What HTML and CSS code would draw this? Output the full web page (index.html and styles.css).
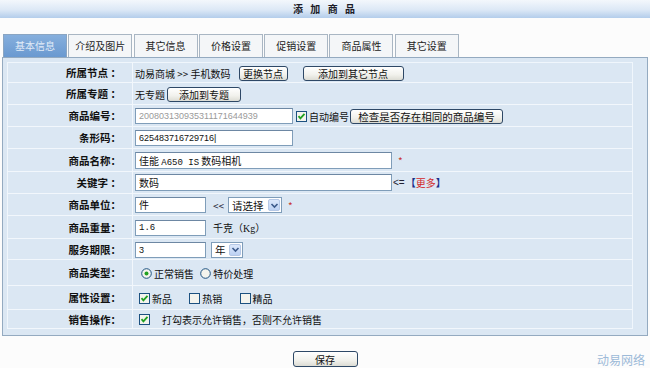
FILE: index.html
```html
<!DOCTYPE html>
<html lang="zh">
<head>
<meta charset="utf-8">
<title>添加商品</title>
<link rel="stylesheet" href="styles.css">
</head>
<body>
<div class="title">添 加 商 品</div>
<ul class="tabs">
  <li class="tab active">基本信息</li>
  <li class="tab">介绍及图片</li>
  <li class="tab">其它信息</li>
  <li class="tab">价格设置</li>
  <li class="tab">促销设置</li>
  <li class="tab">商品属性</li>
  <li class="tab">其它设置</li>
</ul>
<div class="panel">
  <table class="form">
    <tr class="r20">
      <th>所属节点 ：</th>
      <td><span class="txt">动易商城 &gt;&gt; 手机数码</span><button class="btn w-node">更换节点</button><button class="btn w-other">添加到其它节点</button></td>
    </tr>
    <tr class="r22">
      <th>所属专题 ：</th>
      <td><span class="txt">无专题</span><button class="btn w-topic">添加到专题</button></td>
    </tr>
    <tr class="r22">
      <th>商品编号：</th>
      <td><span class="input w-code num grey">200803130935311171644939</span><span class="cb"><svg width="11" height="11" viewBox="0 0 11 11"><rect x="0.5" y="0.5" width="10" height="10" fill="#f4f4ee" stroke="#1c5180"/><path d="M2.5 5.2 L4.4 7.3 L8.5 2.8" fill="none" stroke="#21a121" stroke-width="1.8"/></svg></span><span class="txt">自动编号</span><button class="btn w-check">检查是否存在相同的商品编号</button></td>
    </tr>
    <tr class="r22">
      <th>条形码：</th>
      <td><span class="input w-code num">625483716729716|</span></td>
    </tr>
    <tr class="r23">
      <th>商品名称：</th>
      <td><span class="input w-name tall">佳能 <span class="mono">A650 IS</span> 数码相机</span><span class="star">*</span></td>
    </tr>
    <tr class="r22">
      <th>关键字 ：</th>
      <td><span class="input w-name tall">数码</span><span class="arrow">&lt;=</span><span class="more"><b class="br">【</b>更多<b class="br">】</b></span></td>
    </tr>
    <tr class="r22">
      <th>商品单位：</th>
      <td><span class="input w-short">件</span><span class="ll">&lt;&lt;</span><span class="select w-sel">请选择<span class="sel-btn"><svg width="9" height="9" viewBox="0 0 9 9"><path d="M1.5 3 L4.5 6 L7.5 3" fill="none" stroke="#3c5a8a" stroke-width="1.6"/></svg></span></span><span class="star">*</span></td>
    </tr>
    <tr class="r23">
      <th>商品重量：</th>
      <td><span class="input w-short mono">1.6</span><span class="txt unit">千克（<span class="kg">Kg</span>）</span></td>
    </tr>
    <tr class="r21">
      <th>服务期限：</th>
      <td><span class="input w-short num">3</span><span class="select w-year">年<span class="sel-btn"><svg width="9" height="9" viewBox="0 0 9 9"><path d="M1.5 3 L4.5 6 L7.5 3" fill="none" stroke="#3c5a8a" stroke-width="1.6"/></svg></span></span></td>
    </tr>
    <tr class="r26">
      <th>商品类型：</th>
      <td class="opts">
        <span class="rb"><svg width="11" height="11" viewBox="0 0 11 11"><circle cx="5.5" cy="5.5" r="4.8" fill="#f4f4ee" stroke="#1c5180"/><circle cx="5.5" cy="5.5" r="2" fill="#21a121"/></svg></span><span class="txt">正常销售</span>
        <span class="rb"><svg width="11" height="11" viewBox="0 0 11 11"><circle cx="5.5" cy="5.5" r="4.8" fill="#f4f4ee" stroke="#1c5180"/></svg></span><span class="txt">特价处理</span>
      </td>
    </tr>
    <tr class="r24">
      <th>属性设置：</th>
      <td class="opts">
        <span class="cb"><svg width="11" height="11" viewBox="0 0 11 11"><rect x="0.5" y="0.5" width="10" height="10" fill="#f4f4ee" stroke="#1c5180"/><path d="M2.5 5.2 L4.4 7.3 L8.5 2.8" fill="none" stroke="#21a121" stroke-width="1.8"/></svg></span><span class="txt gap">新品</span>
        <span class="cb"><svg width="11" height="11" viewBox="0 0 11 11"><rect x="0.5" y="0.5" width="10" height="10" fill="#f4f4ee" stroke="#1c5180"/></svg></span><span class="txt gap">热销</span>
        <span class="cb"><svg width="11" height="11" viewBox="0 0 11 11"><rect x="0.5" y="0.5" width="10" height="10" fill="#f4f4ee" stroke="#1c5180"/></svg></span><span class="txt">精品</span>
      </td>
    </tr>
    <tr class="r19">
      <th>销售操作：</th>
      <td class="opts"><span class="cb"><svg width="11" height="11" viewBox="0 0 11 11"><rect x="0.5" y="0.5" width="10" height="10" fill="#f4f4ee" stroke="#1c5180"/><path d="M2.5 5.2 L4.4 7.3 L8.5 2.8" fill="none" stroke="#21a121" stroke-width="1.8"/></svg></span><span class="txt sale">打勾表示允许销售，否则不允许销售</span></td>
    </tr>
  </table>
</div>
<div class="footer">
  <span></span>
  <button class="btn save">保存</button>
  <span class="brand">动易网络</span>
</div>
</body>
</html>
```

FILE: styles.css
```css
* { box-sizing: border-box; }
html, body { margin: 0; padding: 0; }
body {
  width: 650px;
  height: 368px;
  overflow: hidden;
  background: #fcfcfc;
  font-family: "Noto Sans CJK SC", "DejaVu Sans", sans-serif;
  font-size: 10px;
  color: #111;
}
.title {
  height: 18px;
  line-height: 18px;
  text-align: center;
  font-weight: bold;
  font-size: 10px;
  letter-spacing: 2px;
  word-spacing: 1px;
  color: #1c1c28;
  background: linear-gradient(#f3f7fc, #dce8f6 55%, #b3cdeb);
}
.tabs {
  list-style: none;
  margin: 16px 0 0;
  padding: 0 0 0 3px;
  display: flex;
  gap: 1.3px;
  height: 23px;
}
.tab {
  width: 64px;
  height: 23px;
  line-height: 21px;
  text-align: center;
  border: 1px solid #a9b6c3;
  border-bottom: none;
  background: #f4f6f8;
  color: #222;
}
.tab.active {
  background: linear-gradient(#86afdd, #6a99d0);
  color: #e2ecf8;
  border-color: #8aa5c2;
}
.panel {
  margin: 0 2px 0 2px;
  border: 1px solid #94aac0;
  background: #dbe7f3;
  padding: 4px 14px 6px 4px;
}
.form {
  width: 626px;
  border-collapse: collapse;
  border: 1px solid #f0f6fc;
}
.form th, .form td {
  padding: 0;
  border-bottom: 1px solid #f2f7fc;
  white-space: nowrap;
}
.form th {
  width: 125px;
  text-align: right;
  padding-right: 11px;
  font-weight: bold;
  font-size: 10.5px;
  border-right: 1px solid #f2f7fc;
  color: #111;
}
.form td { padding-left: 2px; }
.r19 { height: 19px; }
.r20 { height: 20px; }
.r21 { height: 21px; }
.r22 { height: 22px; }
.r23 { height: 23px; }
.r24 { height: 24px; }
.r26 { height: 26px; }
.form td > * { vertical-align: middle; }
.txt { display: inline-block; }
.btn {
  font-family: "Noto Sans CJK SC", sans-serif;
  font-size: 10px;
  height: 15px;
  line-height: 13px;
  padding: 0;
  margin: 0;
  border: 1px solid #2e4866;
  border-radius: 3px;
  background: linear-gradient(#ffffff, #f1f1ec 60%, #dcdcd4);
  color: #111;
  vertical-align: middle;
}
.w-node { width: 49px; margin-left: 8px; }
.w-other { width: 101px; margin-left: 15px; }
.w-topic { width: 74px; margin-left: 2px; }
.w-check { width: 153px; margin-left: 1px; font-size: 10.5px; }
.input {
  display: inline-block;
  height: 16px;
  line-height: 14px;
  padding: 0 3px;
  border: 1px solid #7f9db9;
  border-top-color: #6d87a3;
  background: #fff;
  overflow: hidden;
}
.input.tall { height: 17px; line-height: 15px; }
.num { font-family: "Liberation Sans", Arial, sans-serif; font-size: 9px; }
.mono { font-family: "Liberation Mono", monospace; font-size: 9px; }
.grey { color: #9a9a9a; }
.w-code { width: 158px; }
.w-name { width: 257px; }
.w-short { width: 71px; }
.cb, .rb { display: inline-block; width: 11px; height: 11px; line-height: 0; }
.cb svg, .rb svg { display: block; }
.w-code + .cb { margin-left: 3px; margin-right: 2px; }
.star { color: #c8342f; margin-left: 6px; font-size: 10px; }
.arrow { margin-left: 1px; color: #223; font-family: "Liberation Sans", sans-serif; }
.more { color: #d2262a; margin-left: 1px; }
.more .br { color: #1a2f8a; font-weight: bold; }
.ll { margin: 0 4px 0 7px; color: #223; }
.select {
  display: inline-flex;
  align-items: center;
  justify-content: space-between;
  height: 16px;
  padding: 0 1px 0 3px;
  border: 1px solid #7f9db9;
  background: #fff;
  font-size: 10.5px;
}
.w-sel { width: 54px; }
.w-year { width: 32px; margin-left: 5px; }
.sel-btn {
  display: inline-flex;
  align-items: center;
  justify-content: center;
  width: 12px;
  height: 12px;
  border: 1px solid #b5c8e6;
  border-radius: 2px;
  background: linear-gradient(#dce8fb, #bcd1f3);
}
.unit { margin-left: 7px; }
.kg { font-family: "Liberation Serif", serif; font-size: 10px; }
.opts .cb, .opts .rb { margin-left: 4px; }
.opts .rb:first-child { margin-left: 6px; }
.opts .txt { margin-left: 2px; }
.opts .gap { margin-right: 11px; }
.opts .sale { margin-left: 12px; }
.footer {
  display: grid;
  grid-template-columns: 1fr auto 1fr;
  align-items: end;
  margin-top: 15px;
}
.save { width: 65px; height: 16px; }
.brand {
  justify-self: end;
  margin-right: 5px;
  font-size: 12px;
  line-height: 14px;
  color: #9dbad8;
}
```
